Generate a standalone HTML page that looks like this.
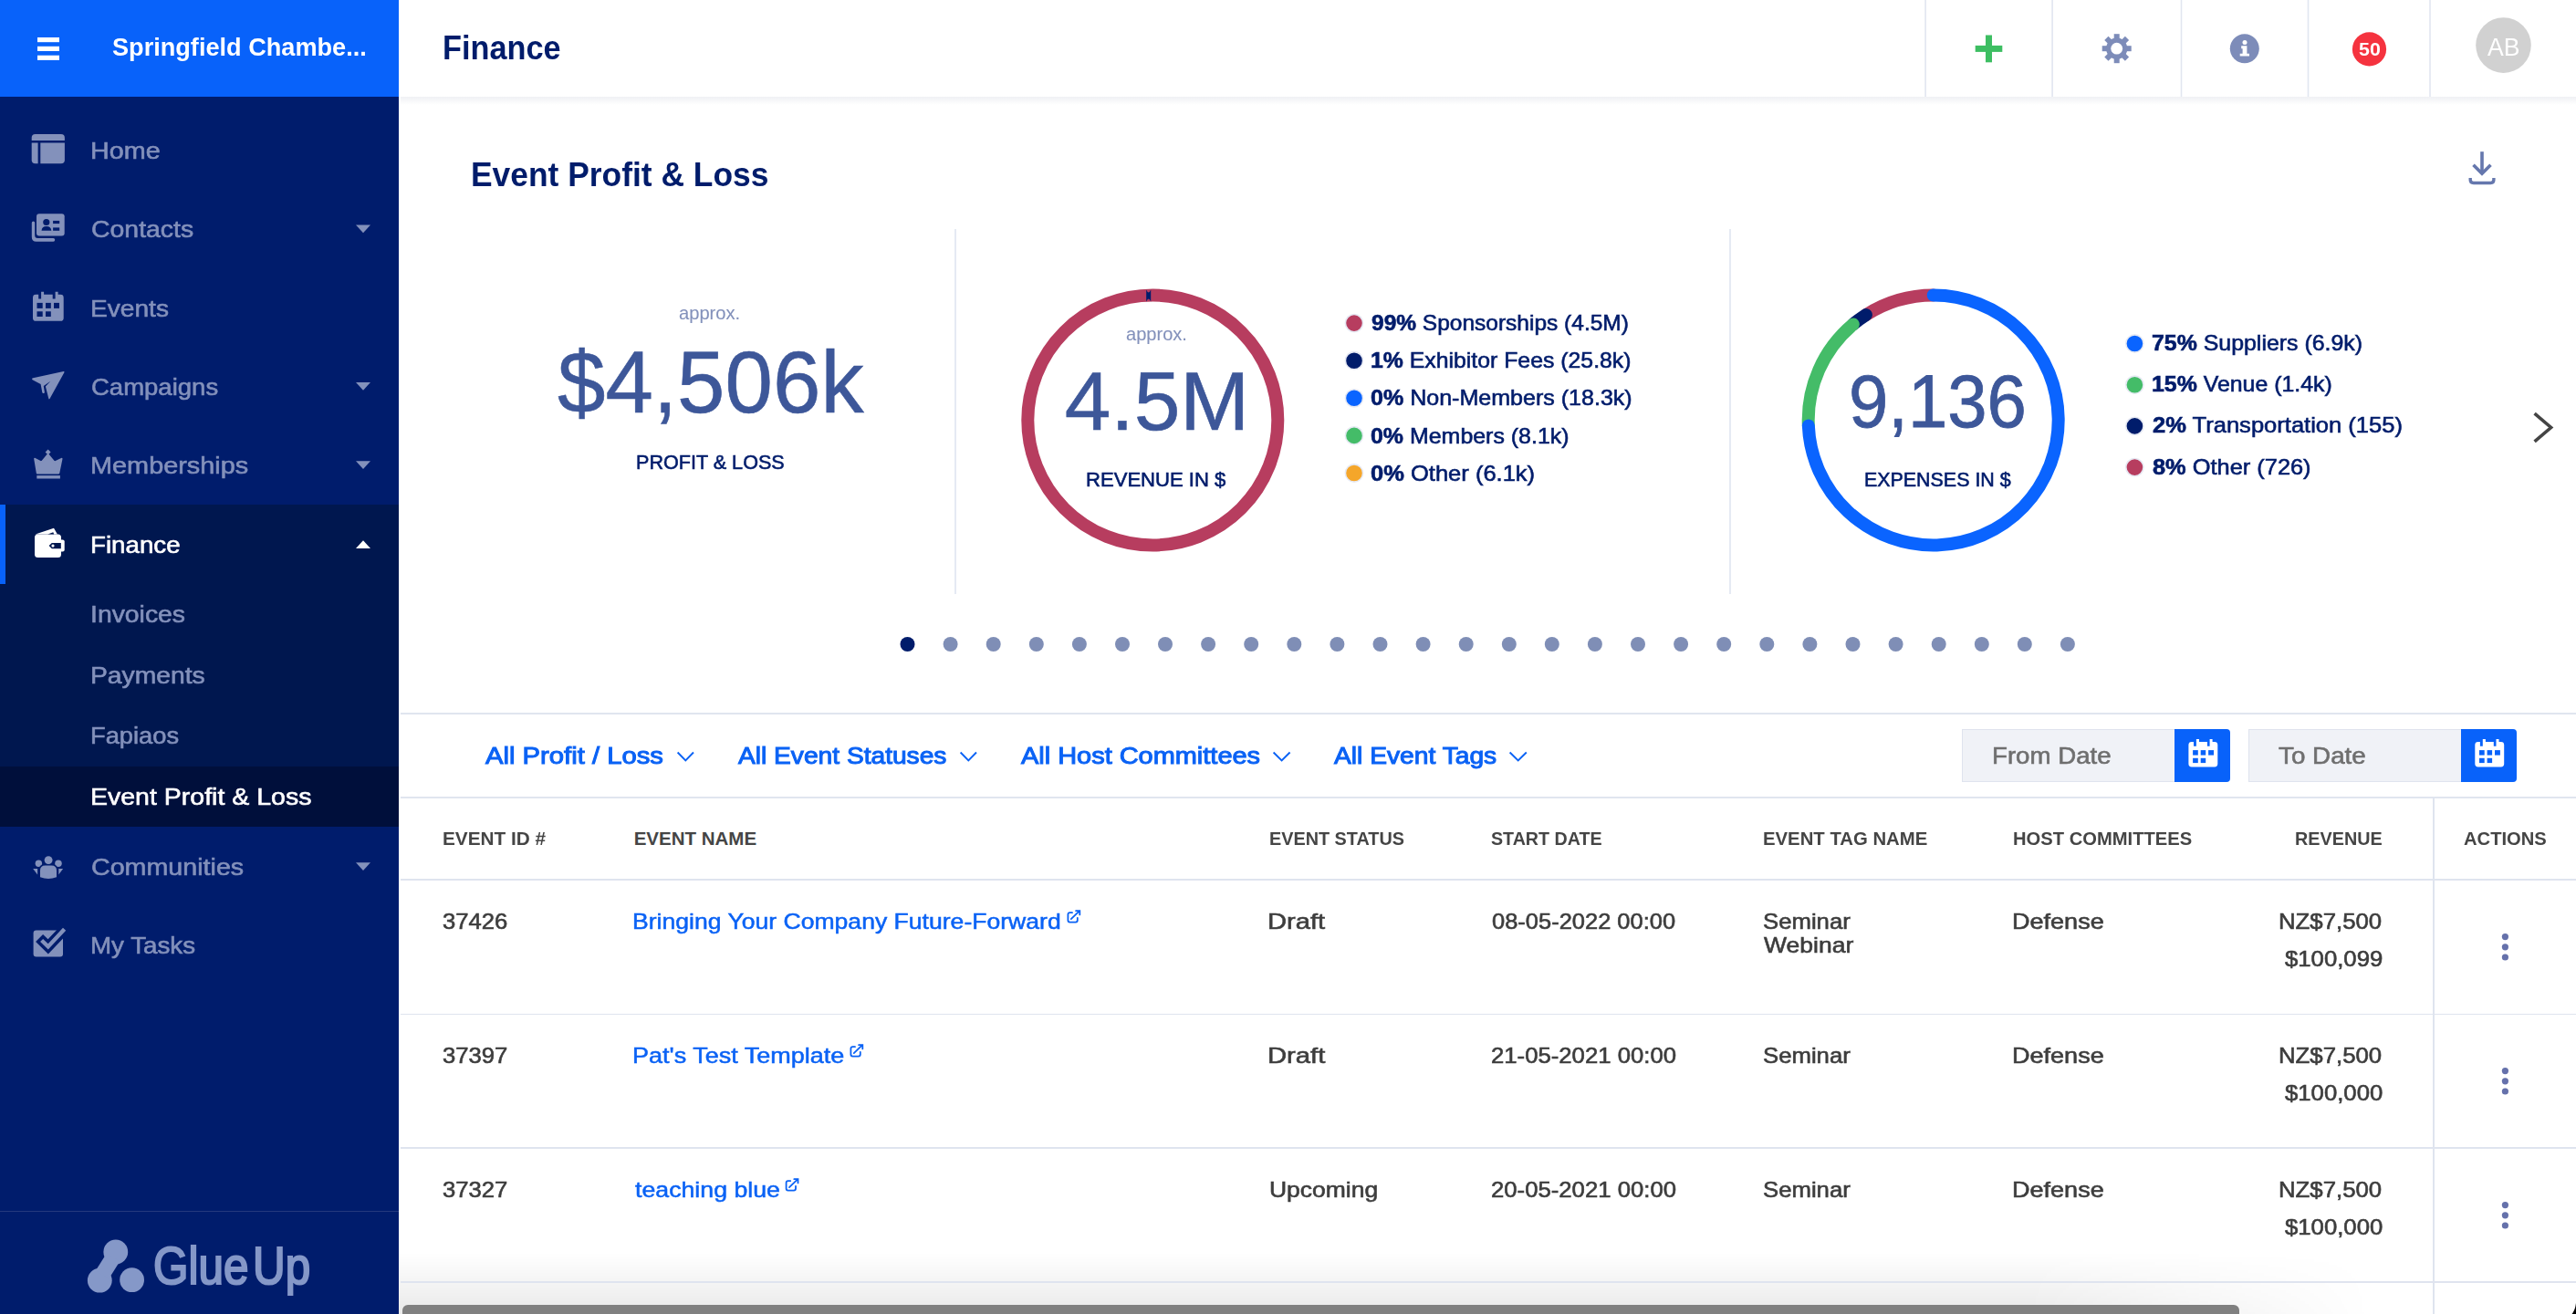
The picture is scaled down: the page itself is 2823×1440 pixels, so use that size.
<!DOCTYPE html>
<html><head><meta charset="utf-8"><title>Finance - Event Profit &amp; Loss</title>
<style>
html,body{margin:0;padding:0;width:2823px;height:1440px;overflow:hidden;background:#fff;font-family:"Liberation Sans", sans-serif;-webkit-font-smoothing:antialiased}
.a{position:absolute}
.tx{position:absolute;white-space:nowrap;line-height:1;transform-origin:0 0}
.tx b{font-weight:700}
svg{position:absolute;left:0;top:0}
</style></head><body>
<!-- sidebar backgrounds -->
<div class="a" style="left:0;top:0;width:437px;height:1440px;background:#001c6c"></div>
<div class="a" style="left:0;top:0;width:437px;height:106px;background:#0862fa"></div>
<div class="a" style="left:0;top:553px;width:437px;height:353px;background:#00174f"></div>
<div class="a" style="left:0;top:553px;width:6px;height:87px;background:#0862fa"></div>
<div class="a" style="left:0;top:840px;width:437px;height:66px;background:#000f3b"></div>
<div class="a" style="left:0;top:1326.5px;width:437px;height:1.5px;background:#24397d"></div>
<!-- header shadow -->
<div class="a" style="left:439px;top:106px;width:2384px;height:9px;background:linear-gradient(rgba(20,40,90,0.065),rgba(20,40,90,0))"></div>
<!-- filter bar lines -->
<div class="a" style="left:439px;top:780.9px;width:2384px;height:1.8px;background:#e0e5ef"></div>
<div class="a" style="left:439px;top:873.1px;width:2384px;height:1.8px;background:#e0e5ef"></div>
<!-- table lines -->
<div class="a" style="left:439px;top:963.4px;width:2384px;height:1.8px;background:#dfe4ef"></div>
<div class="a" style="left:439px;top:1110.5px;width:2384px;height:1.8px;background:#dfe4ef"></div>
<div class="a" style="left:439px;top:1257.1px;width:2384px;height:1.8px;background:#dfe4ef"></div>
<div class="a" style="left:437px;top:1372px;width:2229px;height:68px;background:linear-gradient(rgba(0,0,0,0),rgba(0,0,0,0.085));-webkit-mask-image:linear-gradient(to right,#000 0,#000 80%,rgba(0,0,0,0) 97%)"></div>
<div class="a" style="left:439px;top:1404.4px;width:2384px;height:1.8px;background:#dfe4ef"></div>
<div class="a" style="left:2665.8px;top:874px;width:1.8px;height:566px;background:#dfe4ef"></div>
<div class="a" style="left:441px;top:1430px;width:2013px;height:20px;border-radius:6px;background:#808080"></div>
<!-- date inputs -->
<div class="a" style="left:2150px;top:799px;width:232px;height:56px;background:#f0f2f7;border:1.5px solid #dfe3ee;border-right:0"></div>
<div class="a" style="left:2383px;top:798.5px;width:61px;height:58.5px;background:#0862fa;border-radius:0 4px 4px 0"></div>
<div class="a" style="left:2464px;top:799px;width:232px;height:56px;background:#f0f2f7;border:1.5px solid #dfe3ee;border-right:0"></div>
<div class="a" style="left:2697px;top:798.5px;width:61px;height:58.5px;background:#0862fa;border-radius:0 4px 4px 0"></div>

<svg width="2823" height="1440" viewBox="0 0 2823 1440">
<defs>
  <g id="cal">
    <path d="M0,6 Q0,3 3,3 H32 Q35,3 35,6 V29 Q35,32 32,32 H3 Q0,32 0,29 Z"/>
  </g>
</defs>
<!-- hamburger -->
<g fill="#fff"><rect x="41" y="41" width="24" height="5.2"/><rect x="41" y="50.8" width="24" height="5.2"/><rect x="41" y="60.7" width="24" height="5.2"/></g>
<!-- sidebar icons -->
<g fill="#8391bb">
  <!-- home -->
  <path d="M34.7,154 V151 Q34.7,147 38.7,147 H66.9 Q70.9,147 70.9,151 V154 Z"/>
  <path d="M34.7,156.6 H41.6 V179.3 H38.7 Q34.7,179.3 34.7,175.3 Z"/>
  <path d="M44.3,156.6 H70.9 V175.3 Q70.9,179.3 66.9,179.3 H44.3 Z"/>
  <!-- contacts -->
  <path d="M34.8,244.2 Q34.8,242.4 36.5,242.4 Q38.2,242.4 38.2,244.2 V258 Q38.2,261 41.2,261 H58.4 Q60.2,261 60.2,262.85 Q60.2,264.7 58.4,264.7 H39.8 Q34.8,264.7 34.8,259.7 Z"/>
  <path d="M40,237.2 Q40,234.2 43,234.2 H67.7 Q70.7,234.2 70.7,237.2 V255.4 Q70.7,258.4 67.7,258.4 H43 Q40,258.4 40,255.4 Z"/>
  <!-- events calendar -->
  <path d="M36,326.2 Q36,322.8 39.4,322.8 H42.2 V327.6 H45.1 V319.8 H48.1 V322.8 H57.7 V327.6 H60.6 V319.8 H63.6 V322.8 H66.3 Q69.7,322.8 69.7,326.2 V348.4 Q69.7,351.8 66.3,351.8 H39.4 Q36,351.8 36,348.4 Z"/>
  <!-- campaigns plane -->
  <path d="M35.1,415.2 Q35.3,414.4 36.2,414.2 L69.6,406.9 Q70.8,406.8 70.5,407.9 L54.5,436.9 Q53.8,437.9 53.3,436.8 L49.9,423.4 L55.3,417.8 L47.8,422.9 L48.9,429.9 Q47.6,432.3 46.3,429.9 L44.6,420.9 L35.6,416.2 Q35,415.8 35.1,415.2 Z"/>
  <!-- crown -->
  <path d="M38.2,502.8 L45.5,506.7 L52.6,498.2 L59.7,506.7 L67.5,502.8 L64.3,518.4 H40.8 Z" stroke="#8391bb" stroke-width="2" stroke-linejoin="round"/>
  <path d="M52.6,492.4 L55.6,495.4 L52.6,498.4 L49.6,495.4 Z"/>
  <rect x="40.3" y="521.1" width="25.6" height="3.4"/>
  <!-- communities -->
  <circle cx="42.35" cy="946.3" r="3.7"/>
  <circle cx="63.95" cy="946.3" r="3.75"/>
  <path d="M36.2,952.1 H41.1 V958.4 Z"/>
  <path d="M69.1,952.1 H64.3 V958.4 Z"/>
  <circle cx="53.1" cy="942.6" r="4.45" stroke="#001c6c" stroke-width="3.2" paint-order="stroke"/>
  <path d="M44,954 Q44,948.5 49.5,948.5 H56.5 Q62,948.5 62,954 V961.2 Q53,964.8 44,961.2 Z" stroke="#001c6c" stroke-width="3.2" paint-order="stroke"/>
  <!-- my tasks -->
  <path d="M36.6,1022.6 Q36.6,1019.6 39.6,1019.6 H66 Q69,1019.6 69,1022.6 V1045.6 Q69,1048.6 66,1048.6 H39.6 Q36.6,1048.6 36.6,1045.6 Z"/>
</g>
<g fill="#001c6c">
  <path d="M50.8,243.5 m-3.6,0 a3.6,3.6 0 1,0 7.2,0 a3.6,3.6 0 1,0 -7.2,0"/>
  <path d="M45.5,252.8 Q45.8,247.9 50.9,247.9 Q56,247.9 56.3,252.8 Z"/>
  <rect x="58.1" y="241.9" width="7.1" height="3.2"/>
  <rect x="58.1" y="249.4" width="7.1" height="3.4"/>
  <rect x="40.5" y="331.9" width="6.2" height="6"/><rect x="50" y="331.9" width="5.8" height="6"/><rect x="59" y="331.9" width="6" height="6"/>
  <rect x="40.5" y="341.3" width="6.2" height="5.7"/><rect x="50" y="341.3" width="5.8" height="5.7"/>
  <polyline points="43.1,1028 52.7,1037.4 72.5,1016.6" fill="none" stroke="#001c6c" stroke-width="11.4"/>
</g>
<polyline points="45.6,1030.5 52.7,1037.4 70.6,1018.3" fill="none" stroke="#8391bb" stroke-width="4.4"/>
<!-- wallet (white) -->
<g fill="#fff">
  <path d="M38.7,585.6 L59,578.8 L62.9,585.6 Z"/>
  <path d="M38,589.1 Q38,585.6 41.5,585.6 H63.5 Q67,585.6 67,589.1 V607.5 Q67,611 63.5,611 H41.5 Q38,611 38,607.5 Z"/>
  <path d="M53.5,591.6 H68.7 Q70.7,591.6 70.7,593.6 V602.4 Q70.7,604.4 68.7,604.4 H53.5 Z"/>
</g>
<path d="M52.4,585.6 L58.3,583.3 L59.2,585.6 Z" fill="#00174f"/>
<path d="M51.7,598 L55.2,592.9 H67 V593.3 L67,603.2 H55.2 Z" fill="#00174f" opacity="0"/>
<path d="M53.6,598.1 L56.8,594.9 H66.8 V601.2 H56.8 Z" fill="#00174f"/>
<circle cx="58" cy="598.1" r="1.6" fill="#fff"/>
<!-- sidebar carets -->
<g fill="#8391bb">
  <path d="M390,246.6 H406 L398,255.3 Z"/>
  <path d="M390,419 H406 L398,427.8 Z"/>
  <path d="M390,505.2 H406 L398,514 Z"/>
  <path d="M390,945.3 H406 L398,954 Z"/>
</g>
<path d="M390,601.1 H406 L398,592.3 Z" fill="#fff"/>
<!-- logo -->
<g fill="#8598c8">
  <circle cx="126.8" cy="1372" r="13.4"/>
  <circle cx="109.3" cy="1403.2" r="13.4"/>
  <circle cx="144.6" cy="1402.7" r="13.4"/>
  <line x1="124" y1="1378" x2="112" y2="1397" stroke="#8598c8" stroke-width="17"/>
</g>

<!-- header -->
<g fill="#e1e6f0">
  <rect x="2109.3" y="0" width="1.6" height="106"/>
  <rect x="2248.3" y="0" width="1.6" height="106"/>
  <rect x="2389.7" y="0" width="1.6" height="106"/>
  <rect x="2528.7" y="0" width="1.6" height="106"/>
  <rect x="2662.2" y="0" width="1.6" height="106"/>
</g>
<g fill="#3dbe62"><rect x="2164.7" y="49.9" width="29.6" height="7"/><rect x="2176" y="38.5" width="7" height="29.8"/></g>
<g fill="#7d8cb9">
  <g transform="translate(2319.7,53.2)">
    <rect x="-3" y="-16" width="6" height="32"/>
    <rect x="-3" y="-16" width="6" height="32" transform="rotate(45)"/>
    <rect x="-3" y="-16" width="6" height="32" transform="rotate(90)"/>
    <rect x="-3" y="-16" width="6" height="32" transform="rotate(135)"/>
    <circle r="11.6"/>
  </g>
  <circle cx="2459.8" cy="53.2" r="16"/>
</g>
<circle cx="2319.7" cy="53.2" r="6.4" fill="#fff"/>
<g fill="#fff">
  <circle cx="2460" cy="46.6" r="2.5"/>
  <path d="M2456.2,50.3 H2462.4 V58.8 H2465 V61.5 H2454.7 V58.8 H2457.6 V53.2 H2456.2 Z"/>
</g>
<circle cx="2596.5" cy="53.9" r="18.6" fill="#f5333f"/>
<circle cx="2743.5" cy="49.6" r="30.3" fill="#d1d1d1"/>

<!-- download icon -->
<g fill="none" stroke="#6577ad" stroke-width="3.6">
  <line x1="2720" y1="166.2" x2="2720" y2="189"/>
  <polyline points="2710.5,180.8 2720,190.3 2729.5,180.8"/>
  <path d="M2707.2,195 V197 Q2707.2,200.5 2710.7,200.5 H2729.4 Q2732.9,200.5 2732.9,197 V195" stroke-width="3.4"/>
</g>

<!-- panel dividers -->
<rect x="1046.2" y="251" width="1.6" height="400" fill="#dfe5f1"/>
<rect x="1895.2" y="251" width="1.6" height="400" fill="#dfe5f1"/>

<!-- ring 2 -->
<circle cx="1263.3" cy="460.5" r="137" fill="none" stroke="#b73d5f" stroke-width="14"/>
<path d="M1256.2,317.6 Q1258.7,323.5 1261.2,317.6 L1261.2,330.6 Q1258.7,324.5 1256.2,330.6 Z" fill="#001c6b"/>
<!-- ring 3 -->
<g fill="none" stroke-width="14" stroke-linecap="round">
<path d="M2044.89,345.08 A137,137 0 0,1 2118.70,323.50" stroke="#b73d5f"/>
<path d="M2030.82,355.40 A137,137 0 0,1 2044.89,345.08" stroke="#001c6b"/>
<path d="M1981.83,466.48 A137,137 0 0,1 2030.82,355.40" stroke="#44bc68"/>
<path d="M2118.70,323.50 A137,137 0 1,1 1981.83,466.48" stroke="#0a64ff"/>
</g>

<!-- legend dots -->
<g stroke="#e6e9f3" stroke-width="1.6">
  <circle cx="1484" cy="354.1" r="9.6" fill="#b73d5f"/>
  <circle cx="1484" cy="395.2" r="9.6" fill="#001c6b"/>
  <circle cx="1484" cy="436.3" r="9.6" fill="#0a64ff"/>
  <circle cx="1484" cy="477.4" r="9.6" fill="#44bc68"/>
  <circle cx="1484" cy="518.5" r="9.6" fill="#f5a62a"/>
  <circle cx="2339.4" cy="376.5" r="9.6" fill="#0a64ff"/>
  <circle cx="2339.4" cy="421.7" r="9.6" fill="#44bc68"/>
  <circle cx="2339.4" cy="466.9" r="9.6" fill="#001c6b"/>
  <circle cx="2339.4" cy="512.1" r="9.6" fill="#b73d5f"/>
</g>
<polyline points="2777.6,453.2 2795.6,468.5 2777.6,483.8" fill="none" stroke="#444" stroke-width="3.6"/>

<!-- pagination dots -->
<g fill="#7f8eb6" id="pdots">
<circle cx="994.5" cy="706" r="8" fill="#001c6b"/>
<circle cx="1041.6" cy="706" r="8"/>
<circle cx="1088.7" cy="706" r="8"/>
<circle cx="1135.8" cy="706" r="8"/>
<circle cx="1182.9" cy="706" r="8"/>
<circle cx="1230.0" cy="706" r="8"/>
<circle cx="1277.0" cy="706" r="8"/>
<circle cx="1324.1" cy="706" r="8"/>
<circle cx="1371.2" cy="706" r="8"/>
<circle cx="1418.3" cy="706" r="8"/>
<circle cx="1465.4" cy="706" r="8"/>
<circle cx="1512.5" cy="706" r="8"/>
<circle cx="1559.6" cy="706" r="8"/>
<circle cx="1606.7" cy="706" r="8"/>
<circle cx="1653.8" cy="706" r="8"/>
<circle cx="1700.8" cy="706" r="8"/>
<circle cx="1747.9" cy="706" r="8"/>
<circle cx="1795.0" cy="706" r="8"/>
<circle cx="1842.1" cy="706" r="8"/>
<circle cx="1889.2" cy="706" r="8"/>
<circle cx="1936.3" cy="706" r="8"/>
<circle cx="1983.4" cy="706" r="8"/>
<circle cx="2030.5" cy="706" r="8"/>
<circle cx="2077.6" cy="706" r="8"/>
<circle cx="2124.7" cy="706" r="8"/>
<circle cx="2171.8" cy="706" r="8"/>
<circle cx="2218.8" cy="706" r="8"/>
<circle cx="2265.9" cy="706" r="8"/>
</g>

<!-- filter chevrons -->
<g fill="none" stroke="#0a62f5" stroke-width="1.9">
  <polyline points="742.6,824.5 751.3,833.5 760,824.5"/>
  <polyline points="1052.6,824.5 1061.3,833.5 1070,824.5"/>
  <polyline points="1395.6,824.5 1404.6,833.5 1413.6,824.5"/>
  <polyline points="1654.6,824.5 1663.7,833.5 1672.8,824.5"/>
</g>
<!-- calendar icons in buttons -->
<g id="calbtn">
  <path fill="#fff" d="M2398.4,816.3 Q2398.4,812.9 2401.8,812.9 H2404 V817.7 H2406.9 V810.1 H2410 V812.9 H2418.9 V817.7 H2421.6 V810.1 H2424.6 V812.9 H2426.9 Q2430.3,812.9 2430.3,816.3 V837.1 Q2430.3,840.5 2426.9,840.5 H2401.8 Q2398.4,840.5 2398.4,837.1 Z"/>
  <g fill="#0862fa">
    <rect x="2403.1" y="822.1" width="5.7" height="5.5"/><rect x="2411.7" y="822.1" width="5.5" height="5.5"/><rect x="2420.1" y="822.1" width="5.9" height="5.5"/>
    <rect x="2403.1" y="830.8" width="5.7" height="5.3"/><rect x="2411.7" y="830.8" width="5.5" height="5.3"/>
  </g>
</g>
<use href="#calbtn" transform="translate(313.9,0)"/>

<!-- external link icons -->
<g fill="none" stroke="#0a62f5" stroke-width="1.8" stroke-linecap="round">
  <g id="ext1" transform="translate(1169.5,997.2)">
    <path d="M5.5,3 H2.9 Q0.9,3 0.9,5 V11.4 Q0.9,13.4 2.9,13.4 H9.3 Q11.3,13.4 11.3,11.4 V8.6"/>
    <path d="M4.3,9.9 L13.6,1 M9.6,1 H13.8 V5.2"/>
  </g>
  <use href="#ext1" transform="translate(-238,147)"/>
  <use href="#ext1" transform="translate(-308.8,294)"/>
</g>

<!-- kebabs -->
<g fill="#6571ab">
  <circle cx="2745.4" cy="1026.6" r="3.6"/><circle cx="2745.4" cy="1037.8" r="3.6"/><circle cx="2745.4" cy="1049" r="3.6"/>
  <circle cx="2745.4" cy="1173.6" r="3.6"/><circle cx="2745.4" cy="1184.8" r="3.6"/><circle cx="2745.4" cy="1196" r="3.6"/>
  <circle cx="2745.4" cy="1320.6" r="3.6"/><circle cx="2745.4" cy="1331.8" r="3.6"/><circle cx="2745.4" cy="1343" r="3.6"/>
</g>
<path d="M2818.5,1440 Q2822.2,1435.5 2823,1428 V1440 Z" fill="#000"/>
</svg>
<div class="tx" style="left:123.31px;top:37.70px;font-size:27.50px;font-weight:700;color:#fff;transform:scaleX(0.9861)">Springfield Chambe...</div>
<div class="tx" style="left:98.84px;top:152.40px;font-size:26.63px;font-weight:400;color:#8391bb;transform:scaleX(1.0794);-webkit-text-stroke:0.60px #8391bb">Home</div>
<div class="tx" style="left:99.93px;top:238.30px;font-size:26.63px;font-weight:400;color:#8391bb;transform:scaleX(1.0673);-webkit-text-stroke:0.60px #8391bb">Contacts</div>
<div class="tx" style="left:98.89px;top:324.70px;font-size:26.63px;font-weight:400;color:#8391bb;transform:scaleX(1.0557);-webkit-text-stroke:0.60px #8391bb">Events</div>
<div class="tx" style="left:99.97px;top:411.10px;font-size:26.63px;font-weight:400;color:#8391bb;transform:scaleX(1.0331);-webkit-text-stroke:0.60px #8391bb">Campaigns</div>
<div class="tx" style="left:98.83px;top:497.20px;font-size:26.63px;font-weight:400;color:#8391bb;transform:scaleX(1.0841);-webkit-text-stroke:0.60px #8391bb">Memberships</div>
<div class="tx" style="left:98.92px;top:583.70px;font-size:26.63px;font-weight:400;color:#fff;transform:scaleX(1.0402);-webkit-text-stroke:0.60px #fff">Finance</div>
<div class="tx" style="left:98.87px;top:660.20px;font-size:26.63px;font-weight:400;color:#8391bb;transform:scaleX(1.0653);-webkit-text-stroke:0.60px #8391bb">Invoices</div>
<div class="tx" style="left:98.88px;top:726.90px;font-size:26.63px;font-weight:400;color:#8391bb;transform:scaleX(1.0621);-webkit-text-stroke:0.60px #8391bb">Payments</div>
<div class="tx" style="left:98.95px;top:793.40px;font-size:26.63px;font-weight:400;color:#8391bb;transform:scaleX(1.0250);-webkit-text-stroke:0.60px #8391bb">Fapiaos</div>
<div class="tx" style="left:98.86px;top:859.90px;font-size:26.63px;font-weight:400;color:#fff;transform:scaleX(1.0705);-webkit-text-stroke:0.60px #fff">Event Profit &amp; Loss</div>
<div class="tx" style="left:99.92px;top:936.60px;font-size:26.63px;font-weight:400;color:#8391bb;transform:scaleX(1.0760);-webkit-text-stroke:0.60px #8391bb">Communities</div>
<div class="tx" style="left:98.92px;top:1023.40px;font-size:26.63px;font-weight:400;color:#8391bb;transform:scaleX(1.0417);-webkit-text-stroke:0.60px #8391bb">My Tasks</div>
<div class="tx" style="left:484.75px;top:33.90px;font-size:37.00px;font-weight:700;color:#001c6b;transform:scaleX(0.9263)">Finance</div>
<div class="tx" style="left:2584.73px;top:43.80px;font-size:20.00px;font-weight:700;color:#fff;transform:scaleX(1.0700)">50</div>
<div class="tx" style="left:2725.90px;top:38.80px;font-size:27.00px;font-weight:400;color:#fff;transform:scaleX(0.9857)">AB</div>
<div class="tx" style="left:516.26px;top:174.20px;font-size:36.50px;font-weight:700;color:#001c6b;transform:scaleX(0.9694)">Event Profit &amp; Loss</div>
<div class="tx" style="left:744.48px;top:333.85px;font-size:19.85px;font-weight:400;color:#8391bb;transform:scaleX(1.0156);-webkit-text-stroke:0.10px #8391bb">approx.</div>
<div class="tx" style="left:611.32px;top:370.60px;font-size:96.13px;font-weight:400;color:#3d5799;transform:scaleX(0.9809);-webkit-text-stroke:0.60px #3d5799">$4,506k</div>
<div class="tx" style="left:696.56px;top:494.90px;font-size:22.93px;font-weight:500;color:#001c6b;transform:scaleX(0.9415);-webkit-text-stroke:0.60px #001c6b">PROFIT &amp; LOSS</div>
<div class="tx" style="left:1233.69px;top:356.75px;font-size:19.85px;font-weight:400;color:#8391bb;transform:scaleX(1.0109);-webkit-text-stroke:0.10px #8391bb">approx.</div>
<div class="tx" style="left:1166.70px;top:393.80px;font-size:91.13px;font-weight:400;color:#3d5799;-webkit-text-stroke:0.60px #3d5799">4.5M</div>
<div class="tx" style="left:1190.28px;top:514.90px;font-size:21.63px;font-weight:500;color:#001c6b;transform:scaleX(1.0208);-webkit-text-stroke:0.60px #001c6b">REVENUE IN $</div>
<div class="tx" style="left:2025.91px;top:399.60px;font-size:80.84px;font-weight:400;color:#3d5799;transform:scaleX(0.9633);-webkit-text-stroke:0.80px #3d5799">9,136</div>
<div class="tx" style="left:2042.51px;top:514.90px;font-size:21.63px;font-weight:500;color:#001c6b;transform:scaleX(0.9901);-webkit-text-stroke:0.60px #001c6b">EXPENSES IN $</div>
<div class="tx" style="left:1503.00px;top:342.20px;font-size:24.13px;font-weight:400;color:#001c6b;transform:scaleX(1.0155);-webkit-text-stroke:0.60px #001c6b"><b>99%</b> Sponsorships (4.5M)</div>
<div class="tx" style="left:1501.97px;top:383.30px;font-size:24.13px;font-weight:400;color:#001c6b;transform:scaleX(1.0286);-webkit-text-stroke:0.60px #001c6b"><b>1%</b> Exhibitor Fees (25.8k)</div>
<div class="tx" style="left:1501.96px;top:424.40px;font-size:24.13px;font-weight:400;color:#001c6b;transform:scaleX(1.0380);-webkit-text-stroke:0.60px #001c6b"><b>0%</b> Non-Members (18.3k)</div>
<div class="tx" style="left:1501.97px;top:465.50px;font-size:24.13px;font-weight:400;color:#001c6b;transform:scaleX(1.0335);-webkit-text-stroke:0.60px #001c6b"><b>0%</b> Members (8.1k)</div>
<div class="tx" style="left:1501.94px;top:506.60px;font-size:24.13px;font-weight:400;color:#001c6b;transform:scaleX(1.0577);-webkit-text-stroke:0.60px #001c6b"><b>0%</b> Other (6.1k)</div>
<div class="tx" style="left:2357.87px;top:364.00px;font-size:24.13px;font-weight:400;color:#001c6b;transform:scaleX(1.0315);-webkit-text-stroke:0.60px #001c6b"><b>75%</b> Suppliers (6.9k)</div>
<div class="tx" style="left:2357.87px;top:409.20px;font-size:24.13px;font-weight:400;color:#001c6b;transform:scaleX(1.0311);-webkit-text-stroke:0.60px #001c6b"><b>15%</b> Venue (1.4k)</div>
<div class="tx" style="left:2358.90px;top:454.40px;font-size:24.13px;font-weight:400;color:#001c6b;transform:scaleX(1.0585);-webkit-text-stroke:0.60px #001c6b"><b>2%</b> Transportation (155)</div>
<div class="tx" style="left:2358.90px;top:499.60px;font-size:24.13px;font-weight:400;color:#001c6b;transform:scaleX(1.0524);-webkit-text-stroke:0.60px #001c6b"><b>8%</b> Other (726)</div>
<div class="tx" style="left:531.70px;top:814.90px;font-size:26.05px;font-weight:500;color:#0a62f5;transform:scaleX(1.1224);-webkit-text-stroke:1.00px #0a62f5">All Profit / Loss</div>
<div class="tx" style="left:809.00px;top:814.90px;font-size:26.05px;font-weight:500;color:#0a62f5;transform:scaleX(1.0806);-webkit-text-stroke:1.00px #0a62f5">All Event Statuses</div>
<div class="tx" style="left:1118.60px;top:814.90px;font-size:26.05px;font-weight:500;color:#0a62f5;transform:scaleX(1.1106);-webkit-text-stroke:1.00px #0a62f5">All Host Committees</div>
<div class="tx" style="left:1461.70px;top:814.90px;font-size:26.05px;font-weight:500;color:#0a62f5;transform:scaleX(1.0829);-webkit-text-stroke:1.00px #0a62f5">All Event Tags</div>
<div class="tx" style="left:2182.52px;top:815.00px;font-size:26.63px;font-weight:400;color:#6f6f6f;transform:scaleX(1.0390);-webkit-text-stroke:0.60px #6f6f6f">From Date</div>
<div class="tx" style="left:2497.20px;top:815.00px;font-size:26.63px;font-weight:400;color:#6f6f6f;transform:scaleX(1.0440);-webkit-text-stroke:0.60px #6f6f6f">To Date</div>
<div class="tx" style="left:484.59px;top:908.90px;font-size:20.50px;font-weight:700;color:#454545;transform:scaleX(1.0126)">EVENT ID #</div>
<div class="tx" style="left:694.70px;top:908.90px;font-size:20.50px;font-weight:700;color:#454545">EVENT NAME</div>
<div class="tx" style="left:1390.93px;top:908.90px;font-size:20.50px;font-weight:700;color:#454545;transform:scaleX(0.9669)">EVENT STATUS</div>
<div class="tx" style="left:1633.84px;top:908.90px;font-size:20.50px;font-weight:700;color:#454545;transform:scaleX(0.9592)">START DATE</div>
<div class="tx" style="left:1932.01px;top:908.90px;font-size:20.50px;font-weight:700;color:#454545;transform:scaleX(0.9911)">EVENT TAG NAME</div>
<div class="tx" style="left:2206.42px;top:908.90px;font-size:20.50px;font-weight:700;color:#454545;transform:scaleX(0.9843)">HOST COMMITTEES</div>
<div class="tx" style="left:2514.53px;top:908.90px;font-size:20.50px;font-weight:700;color:#454545;transform:scaleX(0.9653)">REVENUE</div>
<div class="tx" style="left:2699.82px;top:908.90px;font-size:20.50px;font-weight:700;color:#454545;transform:scaleX(0.9846)">ACTIONS</div>
<div class="tx" style="left:484.54px;top:997.80px;font-size:24.13px;font-weight:400;color:#3d3d3d;transform:scaleX(1.0636);-webkit-text-stroke:0.60px #3d3d3d">37426</div>
<div class="tx" style="left:693.31px;top:997.85px;font-size:24.27px;font-weight:500;color:#0a62f5;transform:scaleX(1.0951);-webkit-text-stroke:0.50px #0a62f5">Bringing Your Company Future-Forward</div>
<div class="tx" style="left:1389.49px;top:997.80px;font-size:24.13px;font-weight:400;color:#3d3d3d;transform:scaleX(1.2059);-webkit-text-stroke:0.60px #3d3d3d">Draft</div>
<div class="tx" style="left:1634.80px;top:997.80px;font-size:24.13px;font-weight:400;color:#3d3d3d;transform:scaleX(1.0558);-webkit-text-stroke:0.60px #3d3d3d">08-05-2022 00:00</div>
<div class="tx" style="left:1931.93px;top:997.80px;font-size:24.13px;font-weight:400;color:#3d3d3d;transform:scaleX(1.0663);-webkit-text-stroke:0.60px #3d3d3d">Seminar</div>
<div class="tx" style="left:1933.00px;top:1024.30px;font-size:24.13px;font-weight:400;color:#3d3d3d;transform:scaleX(1.0989);-webkit-text-stroke:0.60px #3d3d3d">Webinar</div>
<div class="tx" style="left:2205.16px;top:997.80px;font-size:24.13px;font-weight:400;color:#3d3d3d;transform:scaleX(1.1207);-webkit-text-stroke:0.60px #3d3d3d">Defense</div>
<div class="tx" style="left:2496.86px;top:997.80px;font-size:24.13px;font-weight:400;color:#3d3d3d;transform:scaleX(1.0683);-webkit-text-stroke:0.60px #3d3d3d">NZ$7,500</div>
<div class="tx" style="left:2503.50px;top:1038.60px;font-size:24.13px;font-weight:400;color:#3d3d3d;transform:scaleX(1.0660);-webkit-text-stroke:0.60px #3d3d3d">$100,099</div>
<div class="tx" style="left:484.54px;top:1144.80px;font-size:24.13px;font-weight:400;color:#3d3d3d;transform:scaleX(1.0636);-webkit-text-stroke:0.60px #3d3d3d">37397</div>
<div class="tx" style="left:693.27px;top:1144.85px;font-size:24.27px;font-weight:500;color:#0a62f5;transform:scaleX(1.1131);-webkit-text-stroke:0.50px #0a62f5">Pat's Test Template</div>
<div class="tx" style="left:1389.48px;top:1144.80px;font-size:24.13px;font-weight:400;color:#3d3d3d;transform:scaleX(1.2118);-webkit-text-stroke:0.60px #3d3d3d">Draft</div>
<div class="tx" style="left:1633.73px;top:1144.80px;font-size:24.13px;font-weight:400;color:#3d3d3d;transform:scaleX(1.0656);-webkit-text-stroke:0.60px #3d3d3d">21-05-2021 00:00</div>
<div class="tx" style="left:1931.93px;top:1144.80px;font-size:24.13px;font-weight:400;color:#3d3d3d;transform:scaleX(1.0663);-webkit-text-stroke:0.60px #3d3d3d">Seminar</div>
<div class="tx" style="left:2205.16px;top:1144.80px;font-size:24.13px;font-weight:400;color:#3d3d3d;transform:scaleX(1.1207);-webkit-text-stroke:0.60px #3d3d3d">Defense</div>
<div class="tx" style="left:2496.86px;top:1144.80px;font-size:24.13px;font-weight:400;color:#3d3d3d;transform:scaleX(1.0683);-webkit-text-stroke:0.60px #3d3d3d">NZ$7,500</div>
<div class="tx" style="left:2503.50px;top:1185.60px;font-size:24.13px;font-weight:400;color:#3d3d3d;transform:scaleX(1.0660);-webkit-text-stroke:0.60px #3d3d3d">$100,000</div>
<div class="tx" style="left:484.54px;top:1291.80px;font-size:24.13px;font-weight:400;color:#3d3d3d;transform:scaleX(1.0636);-webkit-text-stroke:0.60px #3d3d3d">37327</div>
<div class="tx" style="left:695.50px;top:1291.85px;font-size:24.27px;font-weight:500;color:#0a62f5;transform:scaleX(1.1007);-webkit-text-stroke:0.50px #0a62f5">teaching blue</div>
<div class="tx" style="left:1390.80px;top:1291.80px;font-size:24.13px;font-weight:400;color:#3d3d3d;transform:scaleX(1.0972);-webkit-text-stroke:0.60px #3d3d3d">Upcoming</div>
<div class="tx" style="left:1633.73px;top:1291.80px;font-size:24.13px;font-weight:400;color:#3d3d3d;transform:scaleX(1.0656);-webkit-text-stroke:0.60px #3d3d3d">20-05-2021 00:00</div>
<div class="tx" style="left:1931.93px;top:1291.80px;font-size:24.13px;font-weight:400;color:#3d3d3d;transform:scaleX(1.0663);-webkit-text-stroke:0.60px #3d3d3d">Seminar</div>
<div class="tx" style="left:2205.16px;top:1291.80px;font-size:24.13px;font-weight:400;color:#3d3d3d;transform:scaleX(1.1207);-webkit-text-stroke:0.60px #3d3d3d">Defense</div>
<div class="tx" style="left:2496.86px;top:1291.80px;font-size:24.13px;font-weight:400;color:#3d3d3d;transform:scaleX(1.0683);-webkit-text-stroke:0.60px #3d3d3d">NZ$7,500</div>
<div class="tx" style="left:2503.50px;top:1332.60px;font-size:24.13px;font-weight:400;color:#3d3d3d;transform:scaleX(1.0660);-webkit-text-stroke:0.60px #3d3d3d">$100,000</div>
<div class="tx" style="left:167.89px;top:1358.60px;font-size:57.80px;font-weight:400;color:#8598c8;transform:scaleX(0.8555);-webkit-text-stroke:2.20px #8598c8">Glue</div>
<div class="tx" style="left:276.94px;top:1358.60px;font-size:57.80px;font-weight:400;color:#8598c8;transform:scaleX(0.8543);-webkit-text-stroke:2.20px #8598c8">Up</div>
</body></html>
